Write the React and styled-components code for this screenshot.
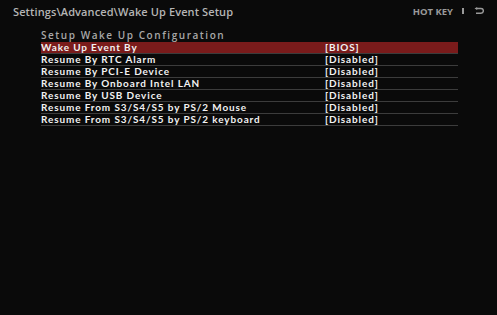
import React from 'react'
import styled, { createGlobalStyle } from 'styled-components'

const GlobalStyle = createGlobalStyle`
    html, body {
        margin: 0;
        padding: 0;
        background: #0a0a0a;
    }
`

const items = [
    { label: 'Wake Up Event By', value: '[BIOS]' },
    { label: 'Resume By RTC Alarm', value: '[Disabled]' },
    { label: 'Resume By PCI-E Device', value: '[Disabled]' },
    { label: 'Resume By Onboard Intel LAN', value: '[Disabled]' },
    { label: 'Resume By USB Device', value: '[Disabled]' },
    { label: 'Resume From S3/S4/S5 by PS/2 Mouse', value: '[Disabled]' },
    { label: 'Resume From S3/S4/S5 by PS/2 keyboard', value: '[Disabled]' },
]

const App = () => {
    return (
        <>
            <GlobalStyle />
            <Screen>
                <TopBar>
                    <Path>Settings\Advanced\Wake Up Event Setup</Path>
                    <HotKey>
                        HOT KEY
                        <Divider />
                        <svg width="10" height="8" viewBox="0 0 10 8">
                            <path d="M2.5 1.5 H7 A2.2 2.2 0 0 1 7 6.2 H2" fill="none" stroke="#9a9a9a" strokeWidth="1.4" />
                            <path d="M0.5 1.5 L3.2 0 V3 Z" fill="#9a9a9a" />
                        </svg>
                    </HotKey>
                </TopBar>
                <Content>
                    <Heading>Setup Wake Up Configuration</Heading>
                    <List>
                        {items.map((item, i) => (
                            <Row key={item.label} selected={i === 0}>
                                <Label>{item.label}</Label>
                                <Value>{item.value}</Value>
                            </Row>
                        ))}
                    </List>
                </Content>
            </Screen>
        </>
    )
}

export default App

const Screen = styled.div`
    width: 497px;
    height: 315px;
    background: #0a0a0a;
    font-family: "Open Sans", "Noto Sans", sans-serif;
    overflow: hidden;
`

const TopBar = styled.div`
    display: flex;
    justify-content: space-between;
    align-items: center;
    height: 22px;
    padding: 0 13px 0 13px;
`

const Path = styled.div`
    color: #b5b5b5;
    font-size: 11px;
    font-weight: 600;
    letter-spacing: 0.1px;
`

const HotKey = styled.div`
    display: flex;
    align-items: center;
    color: #9a9a9a;
    font-size: 9.5px;
    font-weight: 700;
`

const Divider = styled.span`
    width: 2px;
    height: 6px;
    background: #9a9a9a;
    margin: 0 10px 0 9px;
`

const Content = styled.div`
    padding: 6px 39px 0 41px;
`

const Heading = styled.div`
    color: #a8a8a8;
    font-size: 10px;
    font-weight: 600;
    letter-spacing: 1.55px;
    height: 14px;
    line-height: 14px;
`

const List = styled.div`
    display: flex;
    flex-direction: column;
`

const Row = styled.div`
    display: grid;
    grid-template-columns: 284px 1fr;
    height: 11px;
    line-height: 11px;
    border-bottom: 1px solid #3c3c3c;
    background: ${(props) => (props.selected ? '#7a1b1b' : 'transparent')};
    color: #f2f2f2;
    font-family: Lato, "Open Sans", sans-serif;
    font-size: 9.95px;
    font-weight: 700;
    letter-spacing: 0.9px;
`

const Label = styled.span`
    white-space: nowrap;
`

const Value = styled.span`
    white-space: nowrap;
`
